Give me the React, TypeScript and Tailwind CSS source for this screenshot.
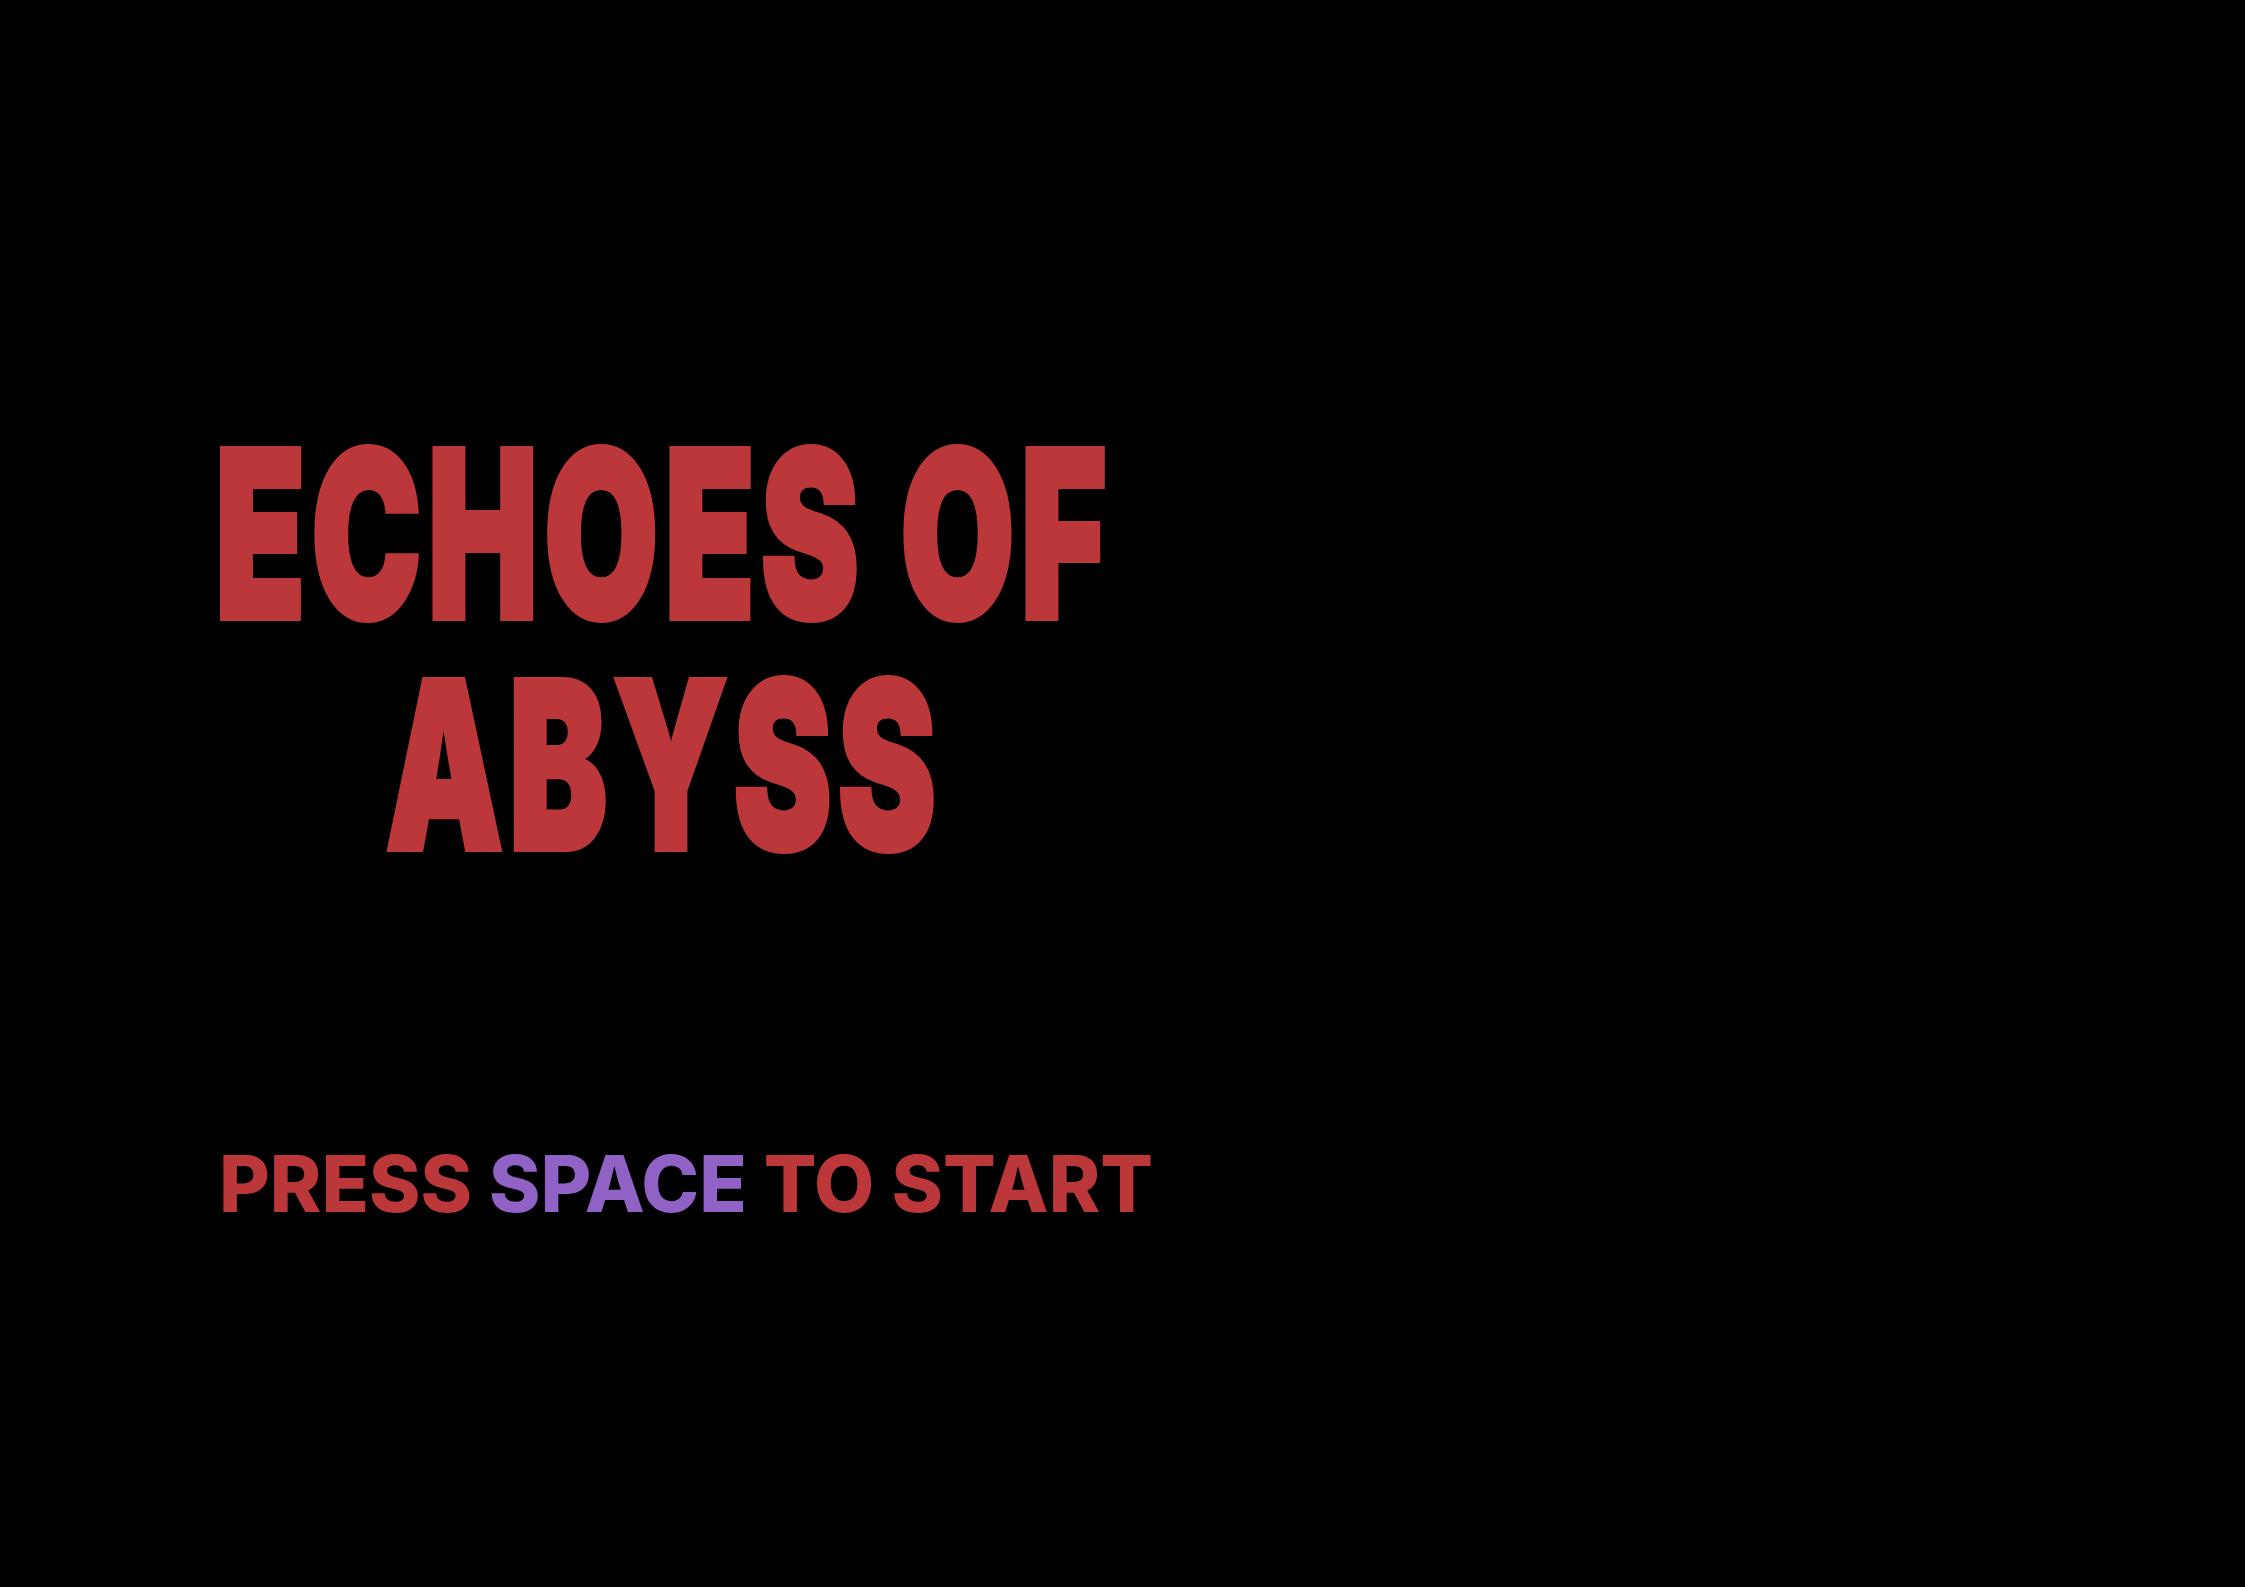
export default function App() {
  return (
    <div className="min-h-screen w-full bg-black font-[Inter,'Liberation_Sans',sans-serif]">
      <div className="pl-[215px] pt-[418px]">
        <h1 className="inline-block origin-left scale-x-[0.636] text-center text-[232px] font-black uppercase leading-[231px] tracking-[0.04em] text-[#bc3739] [-webkit-text-stroke:6px_#bc3739]">
          Echoes of
          <br />
          Abyss
        </h1>

        <p className="mt-[265px] pl-[4px] text-[78px] font-extrabold uppercase leading-none text-[#bc3739]">
          Press <span className="text-[#9062c6]">Space</span> to Start
        </p>
      </div>
    </div>
  );
}
